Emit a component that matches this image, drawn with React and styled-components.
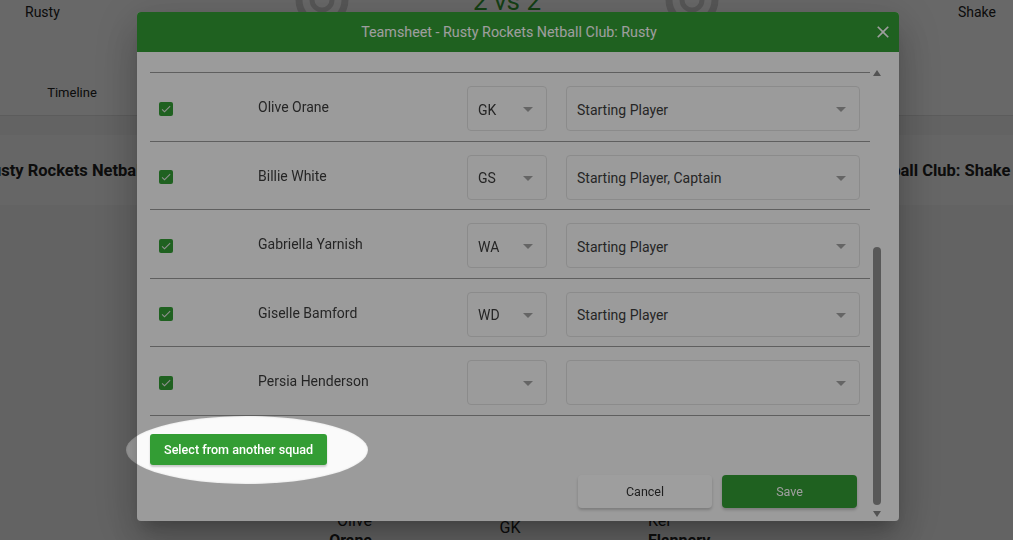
import React from 'react';
import styled, { createGlobalStyle } from 'styled-components';

const GlobalStyle = createGlobalStyle`
  html, body {
    margin: 0;
    padding: 0;
    height: 100%;
    overflow: hidden;
  }
  body {
    font-family: Roboto, "Liberation Sans", Arial, sans-serif;
    background: #f3f3f3;
    color: #333;
  }
  * { box-sizing: border-box; }
`;

const GREEN = '#339d34';

/* ---------- page behind the dialog ---------- */

const Page = styled.div`
  width: 100%;
  height: 540px;
  overflow: hidden;
  background: #f3f3f3;
`;

const TopArea = styled.div`
  background: #fff;
  border-bottom: 1px solid #e2e2e2;
`;

const Scoreboard = styled.div`
  display: grid;
  grid-template-columns: 270px 104px 266px 104px 1fr;
  height: 100px;
  margin-top: -30px;
`;

const TeamName = styled.div`
  padding-top: 34px;
  font-size: 14px;
  line-height: 16px;
  color: #222;
  text-align: ${p => (p.$right ? 'right' : 'left')};
  padding-left: ${p => (p.$right ? '0' : '25px')};
  padding-right: ${p => (p.$right ? '17px' : '0')};
`;

const LogoCell = styled.div`
  display: flex;
  justify-content: center;
`;

const Score = styled.div`
  padding-top: 16px;
  text-align: center;
  font-size: 26px;
  line-height: 30px;
  color: ${GREEN};
`;

const TabBar = styled.div`
  display: flex;
  height: 45px;
`;

const Tab = styled.div`
  width: 144px;
  display: flex;
  align-items: center;
  justify-content: center;
  font-size: 13px;
  color: #222;
`;

const TeamBand = styled.div`
  margin-top: 19px;
  height: 70px;
  background: #fafafa;
  display: flex;
  align-items: center;
  justify-content: space-between;
`;

const BandTeam = styled.div`
  width: ${p => p.$w}px;
  display: flex;
  justify-content: center;
  white-space: nowrap;
  font-size: 16.5px;
  font-weight: 700;
  color: #222;
`;

const Lineup = styled.div`
  margin-top: 306px;
  display: grid;
  grid-template-columns: 372px 276px 1fr;
  font-size: 16px;
  color: #222;
`;

const PlayerCell = styled.div`
  text-align: ${p => p.$align};
  line-height: 20px;
  margin-top: ${p => p.$mt || 0}px;
  & b { font-weight: 700; display: block; }
`;

const NetballLogo = () => (
  <svg width="60" height="60" viewBox="0 0 60 60">
    <circle cx="30" cy="30" r="23" fill="none" stroke="#d4d4d4" strokeWidth="7" />
    <circle cx="30" cy="30" r="10" fill="none" stroke="#d4d4d4" strokeWidth="5" />
  </svg>
);

/* ---------- dialog ---------- */

const Backdrop = styled.div`
  position: fixed;
  inset: 0;
  background: rgba(0, 0, 0, 0.34);
  display: flex;
  align-items: flex-start;
  padding: 12px 0 0 137px;
`;

const Dialog = styled.div`
  width: 762px;
  height: 509px;
  background: #fafafa;
  border-radius: 4px;
  overflow: hidden;
  display: flex;
  flex-direction: column;
  box-shadow: 0 11px 15px -7px rgba(0,0,0,.2), 0 24px 38px 3px rgba(0,0,0,.14), 0 9px 46px 8px rgba(0,0,0,.12);
`;

const DialogHeader = styled.div`
  height: 40px;
  flex: none;
  background: ${GREEN};
  color: #fff;
  display: flex;
  align-items: center;
  justify-content: center;
  position: relative;
  padding-right: 18px;
  font-size: 14.3px;
`;

const CloseButton = styled.button`
  position: absolute;
  right: 4px;
  top: 8px;
  width: 24px;
  height: 24px;
  padding: 0;
  border: none;
  background: none;
  display: flex;
  align-items: center;
  justify-content: center;
  cursor: pointer;
`;

const DialogBody = styled.div`
  flex: 1;
  display: flex;
  padding-left: 13px;
  min-height: 0;
`;

const Content = styled.div`
  width: 720px;
  padding-top: 20px;
  display: flex;
  flex-direction: column;
`;

const PlayerList = styled.div`
  border-top: 1px solid #9a9a9a;
`;

const PlayerRow = styled.div`
  display: grid;
  grid-template-columns: 108px 209px 80px 313px;
  align-items: center;
  padding: 13px 0 9.6px;
  border-bottom: 1px solid #9a9a9a;
`;

const CheckCell = styled.div`
  padding-left: 9px;
  display: flex;
  align-items: center;
`;

const CheckBox = styled.span`
  width: 14px;
  height: 14px;
  border-radius: 2px;
  background: ${GREEN};
  display: flex;
  align-items: center;
  justify-content: center;
`;

const PlayerName = styled.div`
  font-size: 14px;
  color: #3d3d3d;
  margin-top: -3px;
`;

const Select = styled.div`
  height: 45px;
  border: 1px solid #e0e0e0;
  border-radius: 4px;
  display: flex;
  align-items: center;
  justify-content: space-between;
  padding: 2px 13px 0 10px;
  font-size: 14px;
  color: #3d3d3d;
  background: #fafafa;
  margin-left: ${p => p.$ml || 0}px;
`;

const SquadButton = styled.button`
  align-self: flex-start;
  margin-top: 18px;
  height: 31px;
  padding: 0 14px;
  border: none;
  border-radius: 3px;
  background: ${GREEN};
  color: #fff;
  font-family: inherit;
  font-size: 12.6px;
  font-weight: 500;
  box-shadow: 0 2px 2px rgba(0,0,0,.2);
  cursor: pointer;
`;

const Footer = styled.div`
  margin-top: 10px;
  display: flex;
  justify-content: flex-end;
  gap: 10px;
  padding-right: 13px;
`;

const ActionButton = styled.button`
  width: ${p => p.$w}px;
  height: 33px;
  border: none;
  border-radius: 4px;
  font-family: inherit;
  font-size: 12.5px;
  font-weight: 400;
  background: ${p => (p.$primary ? GREEN : '#fff')};
  color: ${p => (p.$primary ? '#fff' : '#333')};
  box-shadow: 0 2px 3px rgba(0,0,0,.2);
  cursor: pointer;
`;

const ScrollRail = styled.div`
  width: 10px;
  margin-left: 2px;
  display: flex;
  flex-direction: column;
  align-items: center;
  padding: 18px 0 4px;
`;

const ArrowUp = styled.span`
  width: 0;
  height: 0;
  border-left: 4.5px solid transparent;
  border-right: 4.5px solid transparent;
  border-bottom: 6px solid #878787;
`;

const ArrowDown = styled(ArrowUp)`
  border-bottom: none;
  border-top: 6px solid #878787;
`;

const Track = styled.div`
  flex: 1;
  width: 100%;
  display: flex;
  flex-direction: column;
  justify-content: flex-end;
  align-items: center;
  padding-bottom: 6px;
`;

const Thumb = styled.div`
  width: 8px;
  height: 258px;
  border-radius: 4px;
  background: #8f8f8f;
`;

/* ---------- product tour spotlight ---------- */

const TourLayer = styled.div`
  position: fixed;
  inset: 0;
  overflow: hidden;
  pointer-events: none;
`;

const Spotlight = styled.div`
  position: absolute;
  left: 126px;
  top: 416px;
  width: 242px;
  height: 68px;
  border-radius: 50%;
  box-shadow: 0 0 0 2000px rgba(0, 0, 0, 0.38), inset 0 0 2px rgba(0,0,0,.15);
`;

const players = [
  { name: 'Olive Orane', pos: 'GK', role: 'Starting Player' },
  { name: 'Billie White', pos: 'GS', role: 'Starting Player, Captain' },
  { name: 'Gabriella Yarnish', pos: 'WA', role: 'Starting Player' },
  { name: 'Giselle Bamford', pos: 'WD', role: 'Starting Player' },
  { name: 'Persia Henderson', pos: '', role: '' },
];

const DropArrow = () => (
  <svg width="10" height="5" viewBox="0 0 10 5">
    <path d="M0 0l5 5 5-5z" fill="#a3a3a3" />
  </svg>
);

const Check = () => (
  <svg width="12" height="12" viewBox="0 0 24 24">
    <path d="M9 16.17L4.83 12l-1.42 1.41L9 19 21 7l-1.41-1.41z" fill="#e8e8e8" />
  </svg>
);

const App = () => {
  return (
    <>
      <GlobalStyle />
      <Page>
        <TopArea>
          <Scoreboard>
            <TeamName>Rusty</TeamName>
            <LogoCell><NetballLogo /></LogoCell>
            <Score>2 vs 2</Score>
            <LogoCell><NetballLogo /></LogoCell>
            <TeamName $right>Shake</TeamName>
          </Scoreboard>
          <TabBar>
            <Tab>Timeline</Tab>
          </TabBar>
        </TopArea>
        <TeamBand>
          <BandTeam $w={215}>Rusty Rockets Netball Club: Rusty</BandTeam>
          <BandTeam $w={261}>Rusty Rockets Netball Club: Shake</BandTeam>
        </TeamBand>
        <Lineup>
          <PlayerCell $align="right">Olive<b>Orane</b></PlayerCell>
          <PlayerCell $align="center" $mt={7}>GK</PlayerCell>
          <PlayerCell $align="left">Kel<b>Flannery</b></PlayerCell>
        </Lineup>
      </Page>

      <Backdrop>
        <Dialog>
          <DialogHeader>
            Teamsheet - Rusty Rockets Netball Club: Rusty
            <CloseButton aria-label="close">
              <svg width="20" height="20" viewBox="0 0 24 24">
                <path d="M19 6.41L17.59 5 12 10.59 6.41 5 5 6.41 10.59 12 5 17.59 6.41 19 12 13.41 17.59 19 19 17.59 13.41 12z" fill="#fff" />
              </svg>
            </CloseButton>
          </DialogHeader>
          <DialogBody>
            <Content>
              <PlayerList>
                {players.map(p => (
                  <PlayerRow key={p.name}>
                    <CheckCell><CheckBox><Check /></CheckBox></CheckCell>
                    <PlayerName>{p.name}</PlayerName>
                    <Select><span>{p.pos}</span><DropArrow /></Select>
                    <Select $ml={19}><span>{p.role}</span><DropArrow /></Select>
                  </PlayerRow>
                ))}
              </PlayerList>
              <SquadButton>Select from another squad</SquadButton>
              <Footer>
                <ActionButton $w={134}>Cancel</ActionButton>
                <ActionButton $w={135} $primary>Save</ActionButton>
              </Footer>
            </Content>
            <ScrollRail>
              <ArrowUp />
              <Track><Thumb /></Track>
              <ArrowDown />
            </ScrollRail>
          </DialogBody>
        </Dialog>
      </Backdrop>

      <TourLayer>
        <Spotlight />
      </TourLayer>
    </>
  );
};

export default App;
